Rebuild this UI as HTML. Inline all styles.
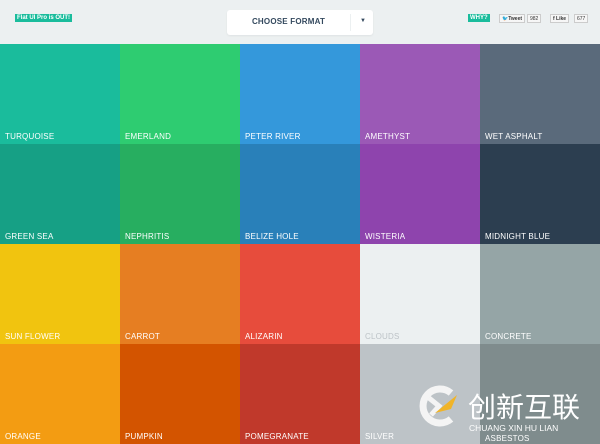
<!DOCTYPE html>
<html><head><meta charset="utf-8"><style>
*{margin:0;padding:0;box-sizing:border-box}
body{width:600px;height:444px;overflow:hidden;background:#ecf0f1;font-family:"Liberation Sans",sans-serif;position:relative}
.hdr{height:44px;position:relative;background:#ecf0f1}
.pro{position:absolute;left:15px;top:14px;background:#1abc9c;color:#fff;font-size:6px;font-weight:bold;padding:1px 2px}
.dd{position:absolute;left:227px;top:10px;width:146px;height:25px;background:#fff;border-radius:3px;box-shadow:0 1px 2px rgba(0,0,0,.06)}
.dd span{position:absolute;left:0;width:123px;top:7px;text-align:center;font-size:8px;font-weight:bold;color:#34495e;letter-spacing:.2px}
.dd i{position:absolute;left:123px;top:4px;height:17px;border-left:1px solid #ecf0f1}
.dd b{position:absolute;left:133px;top:8px;font-size:6px;color:#34495e}
.why{position:absolute;left:468px;top:14px;background:#1abc9c;color:#fff;font-size:6px;font-weight:bold;padding:1px 2px}
.sb{position:absolute;top:14px;height:9px;border:1px solid #ccc;background:#f6f6f6;font-size:5px;color:#333;padding:1px 2px;font-weight:bold}
.grid{position:absolute;top:44px;left:0;width:600px}
.c{position:absolute;width:120px;height:100px}
.c span{position:absolute;left:5px;top:88px;font-size:8px;color:#fff;letter-spacing:.2px}
.wm{position:absolute;left:415px;top:383px}
</style></head><body>
<div class="hdr">
<div class="pro">Flat UI Pro is OUT!</div>
<div class="dd"><span>CHOOSE FORMAT</span><i></i><b>▼</b></div>
<div class="why">WHY?</div>
<div class="sb" style="left:499px">🐦Tweet</div>
<div class="sb" style="left:527px;font-weight:normal">982</div>
<div class="sb" style="left:550px">f Like</div>
<div class="sb" style="left:574px;font-weight:normal">677</div>
</div>
<div class="grid">
<div class="c" style="left:0;top:0;background:#1abc9c"><span>TURQUOISE</span></div>
<div class="c" style="left:120px;top:0;background:#2ecc71"><span>EMERLAND</span></div>
<div class="c" style="left:240px;top:0;background:#3498db"><span>PETER RIVER</span></div>
<div class="c" style="left:360px;top:0;background:#9b59b6"><span>AMETHYST</span></div>
<div class="c" style="left:480px;top:0;background:#5a6a7b"><span>WET ASPHALT</span></div>
<div class="c" style="left:0;top:100px;background:#16a085"><span>GREEN SEA</span></div>
<div class="c" style="left:120px;top:100px;background:#27ae60"><span>NEPHRITIS</span></div>
<div class="c" style="left:240px;top:100px;background:#2980b9"><span>BELIZE HOLE</span></div>
<div class="c" style="left:360px;top:100px;background:#8e44ad"><span>WISTERIA</span></div>
<div class="c" style="left:480px;top:100px;background:#2c3e50"><span>MIDNIGHT BLUE</span></div>
<div class="c" style="left:0;top:200px;background:#f1c40f"><span>SUN FLOWER</span></div>
<div class="c" style="left:120px;top:200px;background:#e67e22"><span>CARROT</span></div>
<div class="c" style="left:240px;top:200px;background:#e74c3c"><span>ALIZARIN</span></div>
<div class="c" style="left:360px;top:200px;background:#ecf0f1"><span style="color:#bdc3c7">CLOUDS</span></div>
<div class="c" style="left:480px;top:200px;background:#95a5a6"><span>CONCRETE</span></div>
<div class="c" style="left:0;top:300px;background:#f39c12"><span>ORANGE</span></div>
<div class="c" style="left:120px;top:300px;background:#d35400"><span>PUMPKIN</span></div>
<div class="c" style="left:240px;top:300px;background:#c0392b"><span>POMEGRANATE</span></div>
<div class="c" style="left:360px;top:300px;background:#bdc3c7"><span>SILVER</span></div>
<div class="c" style="left:480px;top:300px;background:#7f8c8d"><span style="top:90px">ASBESTOS</span></div>
</div>
<div class="wm">
<svg width="45" height="45" viewBox="0 0 45 45" style="position:absolute;left:0;top:0">
<path d="M36 10 A17 17 0 1 0 36 36" fill="none" stroke="#f4f4f4" stroke-width="7"/>
<path d="M14 15 L24 23 L16 32" fill="none" stroke="#f4f4f4" stroke-width="5"/>
<path d="M20 30 L42 12 L36 26 Z" fill="#f0b428"/>
</svg>
<div style="position:absolute;left:53px;top:7px;font-family:'Noto Sans CJK SC',sans-serif;font-size:28px;line-height:32px;color:#fff;white-space:nowrap">创新互联</div>
<div style="position:absolute;left:54px;top:40px;font-size:8.5px;color:#fff;white-space:nowrap">CHUANG XIN HU LIAN</div>
</div>
</body></html>
